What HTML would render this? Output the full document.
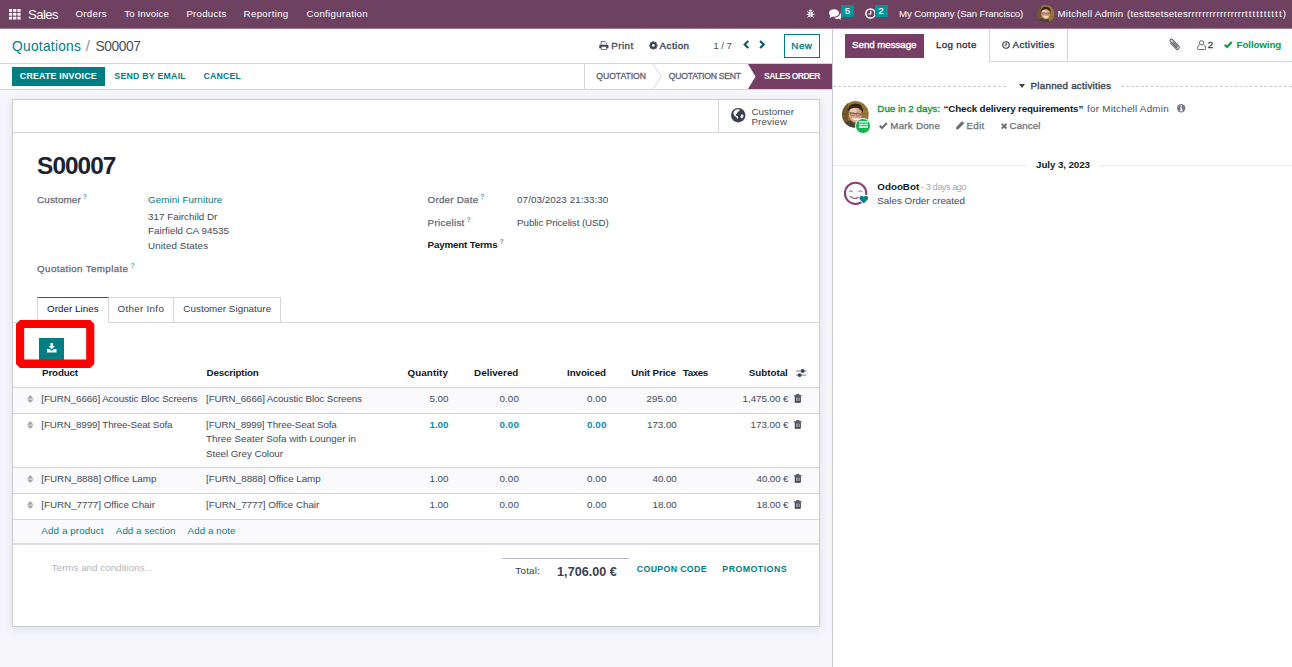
<!DOCTYPE html>
<html lang="en"><head><meta charset="utf-8"><title>Odoo - S00007</title>
<style>
html,body{margin:0;padding:0}
body{width:1292px;height:667px;overflow:hidden;position:relative;background:#f5f5fa;font-family:"Liberation Sans",sans-serif;}
#app{position:absolute;left:0;top:0;width:1292px;height:667px;overflow:hidden}
#app div{position:absolute;box-sizing:border-box}
#app svg{position:absolute;overflow:visible}
.t{position:absolute;white-space:pre;line-height:1;margin:0;padding:0}
</style></head><body><div id="app">
<div style="left:0px;top:0px;width:1292px;height:28px;background:#6f4161;"></div>
<div style="left:0px;top:28px;width:1292px;height:1px;background:#9a7a90;"></div>
<div style="left:0px;top:29px;width:832px;height:61px;background:#fff;"></div>
<div style="left:0px;top:63px;width:832px;height:1px;background:#d4d6dc;"></div>
<div style="left:0px;top:89px;width:832px;height:1px;background:#d4d6dc;"></div>
<div style="left:784px;top:34px;width:36px;height:24px;border:1px solid #017e84;background:#fff;"></div>
<div style="left:12px;top:67px;width:93px;height:19px;background:#017e84;"></div>
<div style="left:584px;top:64px;width:1px;height:25px;background:#d4d6dc;"></div>
<div style="left:12px;top:99px;width:808px;height:528px;background:#fff;border:1px solid #c9ccd4;box-shadow:0 3px 8px rgba(60,60,90,.10);"></div>
<div style="left:13px;top:132px;width:806px;height:1px;background:#d4d6dc;"></div>
<div style="left:718px;top:100px;width:1px;height:32px;background:#d4d6dc;"></div>
<div style="left:13px;top:322px;width:806px;height:1px;background:#d4d6dc;"></div>
<div style="left:108px;top:297px;width:66px;height:26px;background:#fff;border:1px solid #d4d6dc;"></div>
<div style="left:173px;top:297px;width:108px;height:26px;background:#fff;border:1px solid #d4d6dc;"></div>
<div style="left:37px;top:297px;width:72px;height:26px;background:#fff;border:1px solid #d4d6dc;border-top:1px solid #6f4161;border-bottom:none;"></div>
<div style="left:39px;top:338px;width:25px;height:24px;background:#017e84;"></div>
<div style="left:13px;top:388px;width:806px;height:25px;background:#fafafc;"></div>
<div style="left:13px;top:468px;width:806px;height:25px;background:#fafafc;"></div>
<div style="left:13px;top:520px;width:806px;height:23px;background:#fafafc;"></div>
<div style="left:13px;top:387px;width:806px;height:1px;background:#d4d6dc;"></div>
<div style="left:13px;top:413px;width:806px;height:1px;background:#d4d6dc;"></div>
<div style="left:13px;top:467px;width:806px;height:1px;background:#d4d6dc;"></div>
<div style="left:13px;top:493px;width:806px;height:1px;background:#d4d6dc;"></div>
<div style="left:13px;top:519px;width:806px;height:1px;background:#d4d6dc;"></div>
<div style="left:13px;top:543px;width:806px;height:2px;background:#dcdee4;"></div>
<div style="left:502px;top:558px;width:127px;height:1px;background:#b4b7bf;"></div>
<div style="left:832px;top:29px;width:460px;height:638px;background:#fff;"></div>
<div style="left:832px;top:29px;width:1px;height:638px;background:#c9ccd4;"></div>
<div style="left:845px;top:34px;width:79px;height:24px;background:#763e65;"></div>
<div style="left:989px;top:29px;width:1px;height:33px;background:#d4d6dc;"></div>
<div style="left:1067px;top:29px;width:1px;height:33px;background:#d4d6dc;"></div>
<div style="left:989px;top:61px;width:303px;height:1px;background:#d4d6dc;"></div>
<div style="left:833px;top:165px;width:194px;height:1px;background:#ebecef;"></div>
<div style="left:1099px;top:165px;width:193px;height:1px;background:#ebecef;"></div>
<svg style="left:8.8px;top:8.8px" width="11.6" height="10.5" viewBox="0 0 11 10" ><rect x="0" y="0.00" width="3" height="2.67" fill="#fff"/><rect x="0" y="3.67" width="3" height="2.67" fill="#fff"/><rect x="0" y="7.34" width="3" height="2.67" fill="#fff"/><rect x="4" y="0.00" width="3" height="2.67" fill="#fff"/><rect x="4" y="3.67" width="3" height="2.67" fill="#fff"/><rect x="4" y="7.34" width="3" height="2.67" fill="#fff"/><rect x="8" y="0.00" width="3" height="2.67" fill="#fff"/><rect x="8" y="3.67" width="3" height="2.67" fill="#fff"/><rect x="8" y="7.34" width="3" height="2.67" fill="#fff"/></svg>
<svg style="left:806px;top:8.8px" width="9.2" height="9.2" viewBox="0 0 18 18" ><ellipse cx="9" cy="10.5" rx="4.2" ry="5.8" fill="#fff"/><path d="M5.5 4.2a3.5 3 0 0 1 7 0z" fill="#fff"/><path d="M1 10.5h16M2.5 4.5l3.5 3M15.5 4.5l-3.5 3M2.5 16.5l3.5-3M15.5 16.5l-3.5-3" stroke="#fff" stroke-width="1.6" fill="none"/><path d="M9 6v10" stroke="#714B67" stroke-width="1"/></svg>
<svg style="left:829px;top:9px" width="13" height="10.5" viewBox="0 0 26 21" ><ellipse cx="10" cy="8" rx="10" ry="7.5" fill="#fff"/><path d="M3 12l-2 6 7-3z" fill="#fff"/><path d="M22 8.5c2.5 1.2 4 3 4 5.2 0 2-1.3 3.700-3.400 4.900l2 2.800-5.600-1.700c-3.500.5-6.800-.5-8.500-2.300 6.500-.2 11.500-3.600 11.500-8.900z" fill="#fff"/></svg>
<div style="left:841px;top:4.5px;width:13px;height:12.3px;background:#00959a;"></div>
<svg style="left:865px;top:8.3px" width="11" height="11" viewBox="0 0 22 22" ><circle cx="11" cy="11" r="9.2" fill="none" stroke="#fff" stroke-width="3"/><path d="M11.500 5.500v6.500h-5" fill="none" stroke="#fff" stroke-width="2.4"/></svg>
<div style="left:874.8px;top:4.5px;width:13px;height:12.3px;background:#00959a;"></div>
<svg style="left:1037.2px;top:5.2px" width="17.6" height="17.6" viewBox="0 0 27 27" ><defs><clipPath id="a1c"><circle cx="13.5" cy="13.5" r="13.5"/></clipPath></defs><g clip-path="url(#a1c)"><rect width="27" height="27" fill="#9a7836"/><path d="M0 4h27M0 8.500h27M0 13h27M0 17.500h27M0 22h27" stroke="#6e5325" stroke-width=".9" opacity=".55"/><rect x="0" y="0" width="6" height="27" fill="#4a3420" opacity=".45"/><path d="M1 27c.5-4 3-6.500 7-7.500l4 3 5-1.500 3 6z" fill="#4d4038"/><ellipse cx="13.300" cy="13.800" rx="6.300" ry="7.900" transform="rotate(-9 13.3 13.8)" fill="#d9a68c"/><ellipse cx="11.500" cy="9.800" rx="3.400" ry="2.300" fill="#efd3c4" opacity=".85"/><path d="M5.800 11.500c-.8-5.500 3-9 7.700-9 4.800 0 8.500 3.200 7.600 9.500-1.200-3.300-3.200-5.300-7.400-5.300-4 0-6.400 1.300-7.900 4.800z" fill="#35261e"/><path d="M6.800 11.800l13.200 1.600" stroke="#4a3b33" stroke-width=".6" opacity=".8"/><rect x="8.200" y="11.700" width="4.300" height="2.700" rx=".6" fill="none" stroke="#4a3b33" stroke-width=".5" opacity=".8" transform="rotate(6 10 13)"/><rect x="14.300" y="12.300" width="4.300" height="2.700" rx=".6" fill="none" stroke="#4a3b33" stroke-width=".5" opacity=".8" transform="rotate(6 16 13.5)"/><path d="M10.300 17.300c2 2.300 5 2.500 7 .3-2.300.6-4.600.5-7-.3z" fill="#fff" stroke="#fff" stroke-width=".5"/></g></svg>
<svg style="left:599.3px;top:41px" width="9.7" height="9" viewBox="0 0 19.4 18" ><path d="M4.200 7V1h7.600l3.200 3v3" fill="none" stroke="#4a4f5c" stroke-width="1.500"/><path d="M0.500 9.300a2 2 0 0 1 2-2h14.400a2 2 0 0 1 2 2v5.200h-4v-2.800h-10.400v2.800h-4z" fill="#3f4451"/><path d="M4.200 11v6h11v-6" fill="none" stroke="#4a4f5c" stroke-width="1.500"/></svg>
<svg style="left:649.2px;top:41.2px" width="8.8" height="8.8" viewBox="0 0 20 20" ><g fill="#374151"><circle cx="10" cy="10" r="7.300"/><rect x="7.700" y="0.400" width="4.600" height="19.200" rx=".6" transform="rotate(0 10 10)"/><rect x="7.700" y="0.400" width="4.600" height="19.200" rx=".6" transform="rotate(45 10 10)"/><rect x="7.700" y="0.400" width="4.600" height="19.200" rx=".6" transform="rotate(90 10 10)"/><rect x="7.700" y="0.400" width="4.600" height="19.200" rx=".6" transform="rotate(135 10 10)"/></g><circle cx="10" cy="10" r="3.100" fill="#fff"/></svg>
<svg style="left:742.6px;top:39.8px" width="6.4" height="9" viewBox="0 0 6.4 9" ><path d="M5.300 0.900L1.700 4.500l3.600 3.600" fill="none" stroke="#005e63" stroke-width="2.100"/></svg>
<svg style="left:759.4px;top:39.8px" width="6.4" height="9" viewBox="0 0 6.4 9" ><path d="M1.100 0.900L4.700 4.500l-3.600 3.600" fill="none" stroke="#005e63" stroke-width="2.100"/></svg>
<svg style="left:584px;top:64px" width="248" height="25" viewBox="0 0 248 25" ><path d="M69 0l8.300 12.500L69 25" fill="none" stroke="#d4d6dc" stroke-width="1"/><path d="M164 0h84v25h-84l7.500-12.500z" fill="#763e65"/></svg>
<svg style="left:731.4px;top:107.8px" width="14.4" height="14.4" viewBox="0 0 28 28" ><circle cx="14" cy="14" r="14" fill="#374151"/><path d="M9 3.500c3-1.500 6-1.500 8 0l-1 3-3 1-1 3-3 1.500 1 3 3 .5 1 3-1 3-3-4-3-2-2.500-5c.5-3 2-5.500 4.500-7z" fill="#fff"/><path d="M19.500 13l3-1 2 3-1.500 4-3 1.500-1.500-3.500z" fill="#fff"/></svg>
<svg style="left:47px;top:343px" width="9.5" height="9.5" viewBox="0 0 19 19" ><path d="M7 0h5v6h4l-6.500 6.500L3 6h4z" fill="#fff"/><path d="M0 12h5l3 3h3l3-3h5v7H0z" fill="#fff"/></svg>
<svg style="left:16px;top:320px" width="78.3" height="48" viewBox="0 0 78.3 48" ><path fill-rule="evenodd" fill="#fe0000" d="M4 0h70.3l4 4v40l-4 4H4l-4-4V4zM8.2 8v31.600h62V8z"/></svg>
<svg style="left:796px;top:368.5px" width="10.4" height="8.5" viewBox="0 0 20.8 17" ><path d="M0 4h20.800M0 12.200h20.800" stroke="#4a4f5c" stroke-width="1.500"/><circle cx="13.400" cy="4" r="3.800" fill="#374151"/><circle cx="7.300" cy="12.200" r="3.800" fill="#374151"/></svg>
<svg style="left:27.3px;top:395.3px" width="6.5" height="8.1" viewBox="0 0 13 16.2" ><path d="M6.500 0l6.500 7.300h-13z" fill="#a3a6ae"/><path d="M6.500 16.200l6.500-7.300h-13z" fill="#a3a6ae"/></svg>
<svg style="left:793.6px;top:394.05px" width="7.6" height="8.8" viewBox="0 0 15.2 17.6" ><path d="M0 3.600h15.200" stroke="#2f3644" stroke-width="2"/><path d="M5 3.200V1h5.200v2.200" fill="none" stroke="#2f3644" stroke-width="1.700"/><path d="M1.600 4.600h12v11.300a1.600 1.600 0 0 1-1.600 1.600H3.200a1.600 1.600 0 0 1-1.600-1.600z" fill="#2f3644"/><path d="M4.700 6.600v8M7.600 6.600v8M10.500 6.600v8" stroke="#fff" stroke-width="1.500" opacity=".85"/></svg>
<svg style="left:27.3px;top:421.3px" width="6.5" height="8.1" viewBox="0 0 13 16.2" ><path d="M6.500 0l6.500 7.300h-13z" fill="#a3a6ae"/><path d="M6.500 16.200l6.500-7.300h-13z" fill="#a3a6ae"/></svg>
<svg style="left:793.6px;top:420.05px" width="7.6" height="8.8" viewBox="0 0 15.2 17.6" ><path d="M0 3.600h15.200" stroke="#2f3644" stroke-width="2"/><path d="M5 3.200V1h5.200v2.200" fill="none" stroke="#2f3644" stroke-width="1.700"/><path d="M1.600 4.600h12v11.300a1.600 1.600 0 0 1-1.600 1.600H3.200a1.600 1.600 0 0 1-1.600-1.600z" fill="#2f3644"/><path d="M4.700 6.600v8M7.600 6.600v8M10.500 6.600v8" stroke="#fff" stroke-width="1.500" opacity=".85"/></svg>
<svg style="left:27.3px;top:475.3px" width="6.5" height="8.1" viewBox="0 0 13 16.2" ><path d="M6.500 0l6.500 7.300h-13z" fill="#a3a6ae"/><path d="M6.500 16.200l6.500-7.300h-13z" fill="#a3a6ae"/></svg>
<svg style="left:793.6px;top:474.05px" width="7.6" height="8.8" viewBox="0 0 15.2 17.6" ><path d="M0 3.600h15.200" stroke="#2f3644" stroke-width="2"/><path d="M5 3.200V1h5.200v2.200" fill="none" stroke="#2f3644" stroke-width="1.700"/><path d="M1.600 4.600h12v11.300a1.600 1.600 0 0 1-1.600 1.600H3.200a1.600 1.600 0 0 1-1.600-1.600z" fill="#2f3644"/><path d="M4.700 6.600v8M7.600 6.600v8M10.500 6.600v8" stroke="#fff" stroke-width="1.500" opacity=".85"/></svg>
<svg style="left:27.3px;top:501.3px" width="6.5" height="8.1" viewBox="0 0 13 16.2" ><path d="M6.500 0l6.500 7.300h-13z" fill="#a3a6ae"/><path d="M6.500 16.200l6.500-7.300h-13z" fill="#a3a6ae"/></svg>
<svg style="left:793.6px;top:500.05px" width="7.6" height="8.8" viewBox="0 0 15.2 17.6" ><path d="M0 3.600h15.200" stroke="#2f3644" stroke-width="2"/><path d="M5 3.200V1h5.200v2.200" fill="none" stroke="#2f3644" stroke-width="1.700"/><path d="M1.600 4.600h12v11.300a1.600 1.600 0 0 1-1.600 1.600H3.200a1.600 1.600 0 0 1-1.600-1.600z" fill="#2f3644"/><path d="M4.700 6.600v8M7.600 6.600v8M10.500 6.600v8" stroke="#fff" stroke-width="1.500" opacity=".85"/></svg>
<svg style="left:1002px;top:40.5px" width="8" height="8" viewBox="0 0 16 16" ><circle cx="8" cy="8" r="6.500" fill="none" stroke="#2f3644" stroke-width="2.300"/><path d="M8.400 3.800v4.800h-3.400" fill="none" stroke="#2f3644" stroke-width="1.900"/></svg>
<svg style="left:1169.2px;top:39.1px" width="10.6" height="10.6" viewBox="0 0 20 20" ><path transform="rotate(-45 10 10)" d="M6.300 3.500V18a3.700 3.700 0 0 0 7.400 0V1a2.500 2.500 0 0 0-5 0V16.500a1.200 1.200 0 0 0 2.400 0V5" fill="none" stroke="#4a4f5c" stroke-width="1.800" stroke-linecap="round"/></svg>
<svg style="left:1196.6px;top:39.6px" width="9.2" height="10" viewBox="0 0 18 20" ><circle cx="9" cy="5.500" r="4.300" fill="none" stroke="#4a4f5c" stroke-width="1.700"/><path d="M1 17.500c0-5 2-8 4.500-8.500M17 17.500c0-5-2-8-4.500-8.500M1 17.200a1.800 1.800 0 0 0 1.800 1.800h12.400a1.800 1.800 0 0 0 1.800-1.800" fill="none" stroke="#4a4f5c" stroke-width="1.700"/></svg>
<svg style="left:1223.8px;top:41px" width="8.5" height="7" viewBox="0 0 17 14" ><path d="M1.500 7.500l4.500 4.500L15.500 2" fill="none" stroke="#0a9a3f" stroke-width="4.200"/></svg>
<div style="left:833px;top:86px;width:173px;height:0;border-top:1px dashed #c9ccd2;"></div>
<div style="left:1121px;top:86px;width:171px;height:0;border-top:1px dashed #c9ccd2;"></div>
<svg style="left:1019px;top:84px" width="6" height="4" viewBox="0 0 6 4" ><path d="M0 0h6L3 4z" fill="#374151"/></svg>
<svg style="left:842.1px;top:101.0px" width="26.8" height="26.8" viewBox="0 0 27 27" ><defs><clipPath id="a2c"><circle cx="13.5" cy="13.5" r="13.5"/></clipPath></defs><g clip-path="url(#a2c)"><rect width="27" height="27" fill="#9a7836"/><path d="M0 4h27M0 8.500h27M0 13h27M0 17.500h27M0 22h27" stroke="#6e5325" stroke-width=".9" opacity=".55"/><rect x="0" y="0" width="6" height="27" fill="#4a3420" opacity=".45"/><path d="M1 27c.5-4 3-6.500 7-7.500l4 3 5-1.500 3 6z" fill="#4d4038"/><ellipse cx="13.300" cy="13.800" rx="6.300" ry="7.900" transform="rotate(-9 13.3 13.8)" fill="#d9a68c"/><ellipse cx="11.500" cy="9.800" rx="3.400" ry="2.300" fill="#efd3c4" opacity=".85"/><path d="M5.800 11.500c-.8-5.500 3-9 7.700-9 4.800 0 8.500 3.200 7.600 9.500-1.200-3.300-3.200-5.300-7.400-5.300-4 0-6.400 1.300-7.900 4.800z" fill="#35261e"/><path d="M6.800 11.800l13.200 1.600" stroke="#4a3b33" stroke-width=".6" opacity=".8"/><rect x="8.200" y="11.700" width="4.300" height="2.700" rx=".6" fill="none" stroke="#4a3b33" stroke-width=".5" opacity=".8" transform="rotate(6 10 13)"/><rect x="14.300" y="12.300" width="4.300" height="2.700" rx=".6" fill="none" stroke="#4a3b33" stroke-width=".5" opacity=".8" transform="rotate(6 16 13.5)"/><path d="M10.300 17.300c2 2.300 5 2.500 7 .3-2.300.6-4.600.5-7-.3z" fill="#fff" stroke="#fff" stroke-width=".5"/></g></svg>
<div style="left:855px;top:118px;width:15.5px;height:15.5px;border-radius:50%;background:#17b454;border:1.3px solid #fff;"></div>
<svg style="left:858.8px;top:121.2px" width="9" height="6.8" viewBox="0 0 18 13.6" ><path d="M0 1.600h18M0 6.800h18M0 12h18" stroke="#fff" stroke-width="3"/><path d="M9 1.600h6M6 6.800h9M11 12h4" stroke="#7fdba3" stroke-width="1.400"/></svg>
<svg style="left:1177px;top:104px" width="8.4" height="8.4" viewBox="0 0 16 16" ><circle cx="8" cy="8" r="8" fill="#7a7d88"/><path d="M6 6.500h3.600v5.500h1.200v1.600H5.600V12h1.300V8H6z" fill="#fff"/><rect x="6.600" y="2.500" width="3" height="2.600" fill="#fff"/></svg>
<svg style="left:879px;top:122px" width="8.5" height="7" viewBox="0 0 17 14" ><path d="M1.500 7.500l4.500 4.500L15.500 2" fill="none" stroke="#6b6f7a" stroke-width="4.200"/></svg>
<svg style="left:955.6px;top:121.4px" width="8.4" height="8.4" viewBox="0 0 16 16" ><path d="M0 16l.8-5L10.300 1.500a2 2 0 0 1 2.800 0l1.400 1.400a2 2 0 0 1 0 2.800L5 15.200z" fill="#6b6f7a"/></svg>
<svg style="left:1000.6px;top:122.6px" width="6.4" height="6.4" viewBox="0 0 12 12" ><path d="M1.600 1.600l8.800 8.800M10.400 1.600l-8.800 8.800" stroke="#6b6f7a" stroke-width="3.700"/></svg>
<svg style="left:843px;top:181px" width="26" height="25" viewBox="0 0 26 25" ><circle cx="12.600" cy="12.350" r="10.650" fill="none" stroke="#87407a" stroke-width="2.100"/><path d="M7.400 15.300c2.200 2.200 5.400 2.600 7.900 1.300" fill="none" stroke="#87407a" stroke-width="1.100" stroke-linecap="round"/><path d="M6.500 10.800c.8-1.500 2.100-1.500 2.900 0M15.800 10.800c.8-1.500 2.100-1.500 2.900 0" fill="none" stroke="#87407a" stroke-width=".9" stroke-linecap="round"/><path d="M20.800 22.400l-3.700-3.700a2.300 2.300 0 0 1 3.250-3.250l.45.450.45-.450a2.300 2.300 0 0 1 3.250 3.250z" fill="#017e84" stroke="#fff" stroke-width="1.600" paint-order="stroke"/></svg>
<span class="t" id="t0" style="left:28.10px;top:8.00px;font-size:13.1px;color:#fff;letter-spacing:-0.573px;">Sales</span>
<span class="t" id="t1" style="left:75.50px;top:9.00px;font-size:9.7px;color:#fff;letter-spacing:0.298px;">Orders</span>
<span class="t" id="t2" style="left:124.30px;top:9.00px;font-size:9.7px;color:#fff;letter-spacing:0.097px;">To Invoice</span>
<span class="t" id="t3" style="left:186.40px;top:9.00px;font-size:9.7px;color:#fff;letter-spacing:0.246px;">Products</span>
<span class="t" id="t4" style="left:243.60px;top:9.00px;font-size:9.7px;color:#fff;letter-spacing:0.332px;">Reporting</span>
<span class="t" id="t5" style="left:306.40px;top:9.00px;font-size:9.7px;color:#fff;letter-spacing:0.306px;">Configuration</span>
<span class="t" id="t6" style="left:845.10px;top:7.00px;font-size:9.2px;color:#fff;-webkit-text-stroke:0.2px #fff;letter-spacing:0.175px;">5</span>
<span class="t" id="t7" style="left:878.60px;top:7.00px;font-size:9.2px;color:#fff;-webkit-text-stroke:0.2px #fff;letter-spacing:0.475px;">2</span>
<span class="t" id="t8" style="left:899.00px;top:9.00px;font-size:9.7px;color:#fff;letter-spacing:-0.152px;">My Company (San Francisco)</span>
<span class="t" id="t9" style="left:1057.50px;top:9.00px;font-size:9.7px;color:#fff;letter-spacing:0.246px;">Mitchell Admin</span><span class="t" id="t10" style="left:1124.10px;top:9.00px;font-size:9.7px;color:#fff;letter-spacing:0.239px;"> (testtsetsetes</span><span class="t" id="t11" style="left:1187.90px;top:9.00px;font-size:9.7px;color:#fff;letter-spacing:0.342px;">rrrrrrrrrrrrrrrr</span><span class="t" id="t12" style="left:1244.90px;top:9.00px;font-size:9.7px;color:#fff;letter-spacing:1.086px;">tttttttttt)</span>
<span class="t" id="t13" style="left:12.10px;top:40.00px;font-size:13.8px;color:#017e84;letter-spacing:0.232px;">Quotations</span>
<span class="t" id="t14" style="left:85.80px;top:38.00px;font-size:15px;color:#8a8e98;letter-spacing:1.178px;">/</span>
<span class="t" id="t15" style="left:95.60px;top:40.00px;font-size:13.8px;color:#4a4f5c;letter-spacing:-0.463px;">S00007</span>
<span class="t" id="t16" style="left:611.35px;top:41.00px;font-size:9.8px;color:#4a4f5c;-webkit-text-stroke:0.35px #4a4f5c;letter-spacing:0.429px;">Print</span>
<span class="t" id="t17" style="left:659.60px;top:41.00px;font-size:9.8px;color:#374151;-webkit-text-stroke:0.35px #374151;letter-spacing:0.428px;">Action</span>
<span class="t" id="t18" style="left:713.35px;top:41.00px;font-size:9.8px;color:#4a4f5c;letter-spacing:-0.106px;">1 / 7</span>
<span class="t" id="t19" style="left:791.35px;top:41.00px;font-size:9.8px;color:#017e84;-webkit-text-stroke:0.35px #017e84;letter-spacing:0.480px;">New</span>
<span class="t" id="t20" style="left:19.85px;top:72.00px;font-size:8.8px;color:#fff;font-weight:700;letter-spacing:0.208px;">CREATE INVOICE</span>
<span class="t" id="t21" style="left:114.35px;top:72.00px;font-size:8.8px;color:#017e84;font-weight:700;letter-spacing:0.214px;">SEND BY EMAIL</span>
<span class="t" id="t22" style="left:203.60px;top:72.00px;font-size:8.8px;color:#017e84;font-weight:700;letter-spacing:0.149px;">CANCEL</span>
<span class="t" id="t23" style="left:596.35px;top:72.00px;font-size:8.6px;color:#5f636f;-webkit-text-stroke:0.3px #5f636f;letter-spacing:-0.029px;">QUOTATION</span>
<span class="t" id="t24" style="left:668.85px;top:72.00px;font-size:8.6px;color:#5f636f;-webkit-text-stroke:0.3px #5f636f;letter-spacing:-0.220px;">QUOTATION SENT</span>
<span class="t" id="t25" style="left:764.10px;top:72.00px;font-size:8.6px;color:#fff;font-weight:700;letter-spacing:-0.571px;">SALES ORDER</span>
<span class="t" id="t26" style="left:751.40px;top:107.00px;font-size:9.8px;color:#4a4f5c;letter-spacing:0.029px;">Customer</span>
<span class="t" id="t27" style="left:751.40px;top:117.00px;font-size:9.8px;color:#4a4f5c;letter-spacing:0.120px;">Preview</span>
<span class="t" id="t28" style="left:37.10px;top:154.00px;font-size:24.4px;color:#1b2230;font-weight:700;letter-spacing:-0.966px;">S00007</span>
<span class="t" id="t29" style="left:37.10px;top:195.00px;font-size:9.8px;color:#646873;-webkit-text-stroke:0.25px #646873;letter-spacing:0.166px;">Customer</span>
<span class="t" id="t30" style="left:82.85px;top:194.00px;font-size:6.8px;color:#4aa3c7;font-weight:700;letter-spacing:-0.556px;">?</span>
<span class="t" id="t31" style="left:148.10px;top:195.00px;font-size:9.8px;color:#017e84;letter-spacing:0.083px;">Gemini Furniture</span>
<span class="t" id="t32" style="left:148.10px;top:212.00px;font-size:9.8px;color:#434959;letter-spacing:0.009px;">317 Fairchild Dr</span>
<span class="t" id="t33" style="left:148.10px;top:226.00px;font-size:9.8px;color:#434959;letter-spacing:0.011px;">Fairfield CA 94535</span>
<span class="t" id="t34" style="left:148.10px;top:241.00px;font-size:9.8px;color:#434959;letter-spacing:0.094px;">United States</span>
<span class="t" id="t35" style="left:37.10px;top:264.00px;font-size:9.8px;color:#646873;-webkit-text-stroke:0.25px #646873;letter-spacing:0.362px;">Quotation Template</span>
<span class="t" id="t36" style="left:130.60px;top:263.00px;font-size:6.8px;color:#4aa3c7;font-weight:700;letter-spacing:-0.556px;">?</span>
<span class="t" id="t37" style="left:427.60px;top:195.00px;font-size:9.8px;color:#646873;-webkit-text-stroke:0.25px #646873;letter-spacing:0.233px;">Order Date</span>
<span class="t" id="t38" style="left:480.35px;top:194.00px;font-size:6.8px;color:#4aa3c7;font-weight:700;letter-spacing:-0.556px;">?</span>
<span class="t" id="t39" style="left:517.10px;top:195.00px;font-size:9.8px;color:#434959;letter-spacing:0.074px;">07/03/2023 21:33:30</span>
<span class="t" id="t40" style="left:427.60px;top:218.00px;font-size:9.8px;color:#646873;-webkit-text-stroke:0.25px #646873;letter-spacing:0.306px;">Pricelist</span>
<span class="t" id="t41" style="left:466.60px;top:217.00px;font-size:6.8px;color:#4aa3c7;font-weight:700;letter-spacing:-0.556px;">?</span>
<span class="t" id="t42" style="left:517.10px;top:218.00px;font-size:9.8px;color:#434959;letter-spacing:-0.095px;">Public Pricelist (USD)</span>
<span class="t" id="t43" style="left:427.60px;top:240.00px;font-size:9.8px;color:#111827;font-weight:700;letter-spacing:-0.188px;">Payment Terms</span>
<span class="t" id="t44" style="left:499.60px;top:239.00px;font-size:6.8px;color:#4aa3c7;font-weight:700;letter-spacing:-0.556px;">?</span>
<span class="t" id="t45" style="left:47.10px;top:304.00px;font-size:9.8px;color:#111827;letter-spacing:0.033px;">Order Lines</span>
<span class="t" id="t46" style="left:117.60px;top:304.00px;font-size:9.8px;color:#374151;letter-spacing:0.297px;">Other Info</span>
<span class="t" id="t47" style="left:183.35px;top:304.00px;font-size:9.8px;color:#374151;letter-spacing:0.037px;">Customer Signature</span>
<span class="t" id="t48" style="left:42.10px;top:368.00px;font-size:9.8px;color:#111827;font-weight:700;letter-spacing:-0.174px;">Product</span>
<span class="t" id="t49" style="left:206.60px;top:368.00px;font-size:9.8px;color:#111827;font-weight:700;letter-spacing:-0.169px;">Description</span>
<span class="t" id="t50" style="left:407.60px;top:368.00px;font-size:9.8px;color:#111827;font-weight:700;letter-spacing:0.071px;">Quantity</span>
<span class="t" id="t51" style="left:474.10px;top:368.00px;font-size:9.8px;color:#111827;font-weight:700;letter-spacing:0.019px;">Delivered</span>
<span class="t" id="t52" style="left:567.10px;top:368.00px;font-size:9.8px;color:#111827;font-weight:700;letter-spacing:-0.119px;">Invoiced</span>
<span class="t" id="t53" style="left:631.35px;top:368.00px;font-size:9.8px;color:#111827;font-weight:700;letter-spacing:-0.118px;">Unit Price</span>
<span class="t" id="t54" style="left:682.80px;top:368.00px;font-size:9.8px;color:#111827;font-weight:700;letter-spacing:-0.393px;">Taxes</span>
<span class="t" id="t55" style="left:748.80px;top:368.00px;font-size:9.8px;color:#111827;font-weight:700;letter-spacing:-0.023px;">Subtotal</span>
<span class="t" id="t56" style="left:41.35px;top:394.00px;font-size:9.8px;color:#434959;letter-spacing:-0.106px;">[FURN_6666] Acoustic Bloc Screens</span>
<span class="t" id="t57" style="left:206.10px;top:394.00px;font-size:9.8px;color:#434959;letter-spacing:-0.114px;">[FURN_6666] Acoustic Bloc Screens</span>
<span class="t" id="t58" style="left:429.60px;top:394.00px;font-size:9.8px;color:#434959;letter-spacing:-0.070px;">5.00</span>
<span class="t" id="t59" style="left:499.60px;top:394.00px;font-size:9.8px;color:#434959;letter-spacing:0.055px;">0.00</span>
<span class="t" id="t60" style="left:587.10px;top:394.00px;font-size:9.8px;color:#434959;letter-spacing:0.055px;">0.00</span>
<span class="t" id="t61" style="left:646.60px;top:394.00px;font-size:9.8px;color:#434959;letter-spacing:0.014px;">295.00</span>
<span class="t" id="t62" style="left:742.60px;top:394.00px;font-size:9.8px;color:#434959;letter-spacing:-0.051px;">1,475.00 €</span>
<span class="t" id="t63" style="left:41.35px;top:420.00px;font-size:9.8px;color:#434959;letter-spacing:-0.121px;">[FURN_8999] Three-Seat Sofa</span>
<span class="t" id="t64" style="left:206.10px;top:420.00px;font-size:9.8px;color:#434959;letter-spacing:-0.140px;">[FURN_8999] Three-Seat Sofa</span>
<span class="t" id="t65" style="left:429.60px;top:420.00px;font-size:9.8px;color:#0a8bb5;font-weight:700;letter-spacing:-0.070px;">1.00</span>
<span class="t" id="t66" style="left:499.60px;top:420.00px;font-size:9.8px;color:#0a8bb5;font-weight:700;letter-spacing:0.055px;">0.00</span>
<span class="t" id="t67" style="left:587.10px;top:420.00px;font-size:9.8px;color:#0a8bb5;font-weight:700;letter-spacing:0.055px;">0.00</span>
<span class="t" id="t68" style="left:647.10px;top:420.00px;font-size:9.8px;color:#434959;letter-spacing:-0.070px;">173.00</span>
<span class="t" id="t69" style="left:750.60px;top:420.00px;font-size:9.8px;color:#434959;letter-spacing:-0.043px;">173.00 €</span>
<span class="t" id="t70" style="left:206.10px;top:434.00px;font-size:9.8px;color:#434959;letter-spacing:0.017px;">Three Seater Sofa with Lounger in</span>
<span class="t" id="t71" style="left:206.10px;top:449.00px;font-size:9.8px;color:#434959;letter-spacing:-0.063px;">Steel Grey Colour</span>
<span class="t" id="t72" style="left:41.35px;top:474.00px;font-size:9.8px;color:#434959;letter-spacing:-0.009px;">[FURN_8888] Office Lamp</span>
<span class="t" id="t73" style="left:206.10px;top:474.00px;font-size:9.8px;color:#434959;letter-spacing:-0.031px;">[FURN_8888] Office Lamp</span>
<span class="t" id="t74" style="left:429.60px;top:474.00px;font-size:9.8px;color:#434959;letter-spacing:-0.070px;">1.00</span>
<span class="t" id="t75" style="left:499.60px;top:474.00px;font-size:9.8px;color:#434959;letter-spacing:0.055px;">0.00</span>
<span class="t" id="t76" style="left:587.10px;top:474.00px;font-size:9.8px;color:#434959;letter-spacing:0.055px;">0.00</span>
<span class="t" id="t77" style="left:652.60px;top:474.00px;font-size:9.8px;color:#434959;letter-spacing:-0.096px;">40.00</span>
<span class="t" id="t78" style="left:756.60px;top:474.00px;font-size:9.8px;color:#434959;letter-spacing:-0.127px;">40.00 €</span>
<span class="t" id="t79" style="left:41.35px;top:500.00px;font-size:9.8px;color:#434959;letter-spacing:-0.026px;">[FURN_7777] Office Chair</span>
<span class="t" id="t80" style="left:206.10px;top:500.00px;font-size:9.8px;color:#434959;letter-spacing:-0.047px;">[FURN_7777] Office Chair</span>
<span class="t" id="t81" style="left:429.60px;top:500.00px;font-size:9.8px;color:#434959;letter-spacing:-0.070px;">1.00</span>
<span class="t" id="t82" style="left:499.60px;top:500.00px;font-size:9.8px;color:#434959;letter-spacing:0.055px;">0.00</span>
<span class="t" id="t83" style="left:587.10px;top:500.00px;font-size:9.8px;color:#434959;letter-spacing:0.055px;">0.00</span>
<span class="t" id="t84" style="left:652.60px;top:500.00px;font-size:9.8px;color:#434959;letter-spacing:-0.096px;">18.00</span>
<span class="t" id="t85" style="left:756.60px;top:500.00px;font-size:9.8px;color:#434959;letter-spacing:-0.127px;">18.00 €</span>
<span class="t" id="t86" style="left:41.35px;top:526.00px;font-size:9.8px;color:#017e84;letter-spacing:0.099px;">Add a product</span>
<span class="t" id="t87" style="left:115.85px;top:526.00px;font-size:9.8px;color:#017e84;letter-spacing:0.013px;">Add a section</span>
<span class="t" id="t88" style="left:187.60px;top:526.00px;font-size:9.8px;color:#017e84;letter-spacing:0.039px;">Add a note</span>
<span class="t" id="t89" style="left:51.60px;top:563.00px;font-size:9.8px;color:#b3b6bd;letter-spacing:0.024px;">Terms and conditions...</span>
<span class="t" id="t90" style="left:515.30px;top:566.00px;font-size:9.8px;color:#374151;letter-spacing:0.246px;">Total:</span>
<span class="t" id="t91" style="left:557.10px;top:566.00px;font-size:12.6px;color:#374151;font-weight:700;letter-spacing:0.027px;">1,706.00 €</span>
<span class="t" id="t92" style="left:636.80px;top:565.00px;font-size:8.8px;color:#017e84;font-weight:700;letter-spacing:0.329px;">COUPON CODE</span>
<span class="t" id="t93" style="left:722.30px;top:565.00px;font-size:8.8px;color:#017e84;font-weight:700;letter-spacing:0.467px;">PROMOTIONS</span>
<span class="t" id="t94" style="left:852.10px;top:40.00px;font-size:9.8px;color:#fff;-webkit-text-stroke:0.35px #fff;letter-spacing:-0.088px;">Send message</span>
<span class="t" id="t95" style="left:936.10px;top:40.00px;font-size:9.8px;color:#1f2633;-webkit-text-stroke:0.25px #1f2633;letter-spacing:0.301px;">Log note</span>
<span class="t" id="t96" style="left:1012.60px;top:40.00px;font-size:9.8px;color:#374151;-webkit-text-stroke:0.35px #374151;letter-spacing:0.364px;">Activities</span>
<span class="t" id="t97" style="left:1207.80px;top:40.00px;font-size:9.8px;color:#374151;-webkit-text-stroke:0.3px #374151;letter-spacing:-0.253px;">2</span>
<span class="t" id="t98" style="left:1236.60px;top:40.00px;font-size:9.8px;color:#0a9a3f;font-weight:700;letter-spacing:-0.124px;">Following</span>
<span class="t" id="t99" style="left:1030.60px;top:81.00px;font-size:9.8px;color:#374151;-webkit-text-stroke:0.35px #374151;letter-spacing:0.239px;">Planned activities</span>
<span class="t" id="t100" style="left:877.35px;top:104.00px;font-size:9.8px;color:#0a9a3f;-webkit-text-stroke:0.35px #0a9a3f;letter-spacing:-0.006px;">Due in 2 days:</span>
<span class="t" id="t101" style="left:943.60px;top:104.00px;font-size:9.8px;color:#111827;font-weight:700;letter-spacing:-0.145px;">“Check delivery requirements”</span>
<span class="t" id="t102" style="left:1087.10px;top:104.00px;font-size:9.8px;color:#4a4f5c;letter-spacing:0.248px;">for Mitchell Admin</span>
<span class="t" id="t103" style="left:890.35px;top:121.00px;font-size:9.8px;color:#6b6f7a;-webkit-text-stroke:0.25px #6b6f7a;letter-spacing:0.209px;">Mark Done</span>
<span class="t" id="t104" style="left:966.60px;top:121.00px;font-size:9.8px;color:#6b6f7a;-webkit-text-stroke:0.25px #6b6f7a;letter-spacing:0.227px;">Edit</span>
<span class="t" id="t105" style="left:1009.60px;top:121.00px;font-size:9.8px;color:#6b6f7a;-webkit-text-stroke:0.25px #6b6f7a;letter-spacing:0.050px;">Cancel</span>
<span class="t" id="t106" style="left:1036.10px;top:160.00px;font-size:9.8px;color:#111827;font-weight:700;letter-spacing:-0.101px;">July 3, 2023</span>
<span class="t" id="t107" style="left:877.35px;top:182.00px;font-size:9.8px;color:#111827;font-weight:700;letter-spacing:-0.015px;">OdooBot</span>
<span class="t" id="t108" style="left:921.10px;top:183.00px;font-size:9.2px;color:#a6a9b1;letter-spacing:-0.461px;">- 3 days ago</span>
<span class="t" id="t109" style="left:877.35px;top:196.00px;font-size:9.8px;color:#434959;letter-spacing:-0.006px;">Sales Order created</span>
</div></body></html>
